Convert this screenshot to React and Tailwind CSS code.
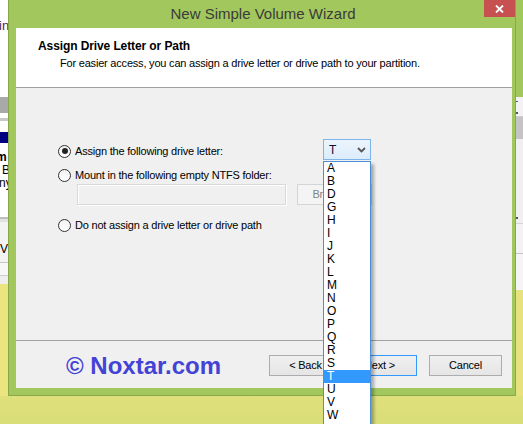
import React from "react";

const LETTERS = ["A", "B", "D", "G", "H", "I", "J", "K", "L", "M", "N", "O", "P", "Q", "R", "S", "T", "U", "V", "W"];

const Radio = ({ checked }) => (
  <span className="w-[13px] h-[13px] rounded-full border border-[#333] bg-gradient-to-b from-[#f2f2f2] to-white flex items-center justify-center shrink-0">
    {checked && <span className="w-[6px] h-[6px] rounded-full bg-[#222]" />}
  </span>
);

const LeftStrip = () => (
  <div className="w-[8px] flex flex-col overflow-hidden text-[12px] leading-none text-black">
    <div className="h-[97px] bg-white pt-[19px]">
      <span className="text-[#4a2960] text-[13px] block -ml-[1px]">in</span>
    </div>
    <div className="h-[16px] bg-[#a9a9a9]" />
    <div className="h-[5px] bg-white" />
    <div className="h-[3px] bg-[#c8c8c8]" />
    <div className="h-[11px] bg-white" />
    <div className="h-[11px] bg-[#000080]" />
    <div className="h-[74px] bg-white flex flex-col pt-[8px] gap-[1px]">
      <span className="font-bold -ml-[4px] h-[12px]">m</span>
      <span className="ml-[2px] h-[12px]">B</span>
      <span className="-ml-[1px] h-[12px]">ny</span>
    </div>
    <div className="h-[2px] bg-[#bdbdbd]" />
    <div className="h-[3px] bg-[#e2e2e2]" />
    <div className="h-[40px] bg-[#f3f3f3] pt-[21px] flex gap-[1px]">
      <span>V</span>
      <span className="text-[#555]">|</span>
    </div>
    <div className="h-[1px] bg-[#c6c6c6]" />
    <div className="h-[12px] bg-[#f7f7f7]" />
    <div className="h-[1px] bg-[#d0d0d0]" />
    <div className="h-[8px] bg-[#eeeeee]" />
    <div className="flex-1 bg-[#ece47f]" />
  </div>
);

const RightStrip = () => (
  <div className="w-[7px] flex flex-col">
    <div className="h-[97px] bg-[#a2c85d]" />
    <div className="h-[6px] bg-[#f3f3f3] flex items-end">
      <span className="w-[2px] h-[1px] bg-[#555] mb-[1px]" />
    </div>
    <div className="h-[14px] bg-[#f3f3f3] border-b border-[#cfcfcf] flex items-end">
      <span className="w-[2px] h-[2px] bg-[#555] mb-[2px]" />
    </div>
    <div className="h-[22px] bg-[#c4c4c4]" />
    <div className="h-[84px] bg-[#f0f0f0] flex items-end">
      <span className="w-[2px] h-[2px] bg-[#555] mb-[4px]" />
    </div>
    <div className="h-[30px] bg-[#f3f3f3] border-t border-[#d4d4d4]" />
    <div className="h-[1px] bg-[#c4c4c4]" />
    <div className="h-[36px] bg-[#f5f5f5]" />
    <div className="flex-1 bg-[#e6e27d]" />
  </div>
);

const Button = ({ children, className = "" }) => (
  <div
    className={
      "h-[21px] border flex items-center justify-center bg-gradient-to-b from-[#f0f0f0] to-[#e5e5e5] text-black " +
      className
    }
  >
    {children}
  </div>
);

export default function App() {
  return (
    <div
      className="relative w-[523px] h-[424px] overflow-hidden flex flex-col bg-[#dcdf7a]"
      style={{ fontFamily: '"Liberation Sans", Arial, sans-serif' }}
    >
      <div className="flex h-[396px]">
        <LeftStrip />

        {/* wizard window */}
        <div className="w-[508px] flex flex-col bg-[#a2c85d] border-x border-b border-[#87a94b]">
          <div className="relative h-[28px] flex justify-center pt-[5px]">
            <span className="text-[15px] leading-[18px] text-[#3b3b3b] ml-[2px]">New Simple Volume Wizard</span>
            <div className="absolute right-[0px] top-0 w-[31px] h-[17px] bg-[#c75050] flex items-center justify-center">
              <svg width="9" height="8" viewBox="0 0 9 8">
                <path d="M1 0.5 L8 7.5 M8 0.5 L1 7.5" stroke="white" strokeWidth="1.8" />
              </svg>
            </div>
          </div>

          <div className="ml-[7px] mr-[3px] h-[360px] flex flex-col bg-[#f0f0f0] text-[11px] tracking-[-0.2px] text-black">
            {/* header */}
            <div className="h-[60px] bg-white border-b border-[#a0a0a0] pl-[22px] pt-[11px]">
              <div className="font-bold text-[12px] leading-[14px] tracking-[-0.1px]">Assign Drive Letter or Path</div>
              <div className="pl-[22px] mt-[3px] leading-[14px]">
                For easier access, you can assign a drive letter or drive path to your partition.
              </div>
            </div>

            {/* body */}
            <div className="h-[253px] border-b border-[#a0a0a0] pl-[42px] pt-[51px]">
              <div className="flex items-start h-[21px]">
                <div className="w-[265px] flex items-center gap-[4px] mt-[4px] h-[16px]">
                  <Radio checked />
                  <span>Assign the following drive letter:</span>
                </div>
                <div className="w-[48px] h-[21px] border border-[#7eb4ea] bg-gradient-to-b from-[#ecf4fc] to-[#dcecfc] flex items-center justify-between pl-[5px] pr-[4px]">
                  <span className="text-[12px] text-[#1a0a30]">T</span>
                  <svg width="9" height="6" viewBox="0 0 9 6">
                    <path d="M1 1 L4.5 4.5 L8 1" fill="none" stroke="#555" strokeWidth="1.8" />
                  </svg>
                </div>
              </div>
              <div className="flex items-center gap-[4px] h-[16px] mt-[7px]">
                <Radio />
                <span>Mount in the following empty NTFS folder:</span>
              </div>
              <div className="flex mt-[1px] ml-[19px] gap-[11px]">
                <div className="w-[209px] h-[21px] border border-[#d9d9d9] shadow-[inset_1px_1px_0_#ffffff,1px_1px_0_#ffffff]" />
                <div className="w-[75px] h-[21px] border border-[#d5d5d5] bg-[#f4f4f4] flex items-center justify-center text-[#838383]">
                  Browse...
                </div>
              </div>
              <div className="flex items-center gap-[4px] h-[16px] mt-[12px]">
                <Radio />
                <span>Do not assign a drive letter or drive path</span>
              </div>
            </div>

            {/* footer */}
            <div className="flex-1 flex items-center pl-[50px] pr-[10px]">
              <span className="text-[24px] font-bold tracking-normal text-[#4343d6] leading-none mt-[2px]">
                © Noxtar.com
              </span>
              <div className="ml-auto flex mt-[1px]">
                <Button className="w-[73px] border-[#acacac]">&lt; Back</Button>
                <Button className="w-[75px] border-[#3399ff]">Next &gt;</Button>
                <Button className="w-[73px] ml-[12px] border-[#acacac]">Cancel</Button>
              </div>
            </div>
          </div>
        </div>

        <RightStrip />
      </div>
      <div className="flex-1 bg-gradient-to-b from-[#dfe07b] to-[#d9de79]" />

      {/* open drop-down list */}
      <div className="absolute left-[323px] top-[161px] w-[48px] h-[270px] bg-white border border-[#4a8fd8] shadow-[3px_3px_3px_rgba(0,0,0,0.3)] text-[12px] leading-[13px]">
        {LETTERS.map((l) =>
          l === "T" ? (
            <div key={l} className="h-[13px] bg-[#3399ff] text-white pl-[3px]">
              {l}
            </div>
          ) : (
            <div key={l} className="h-[13px] text-black pl-[3px]">
              {l}
            </div>
          )
        )}
      </div>
    </div>
  );
}
